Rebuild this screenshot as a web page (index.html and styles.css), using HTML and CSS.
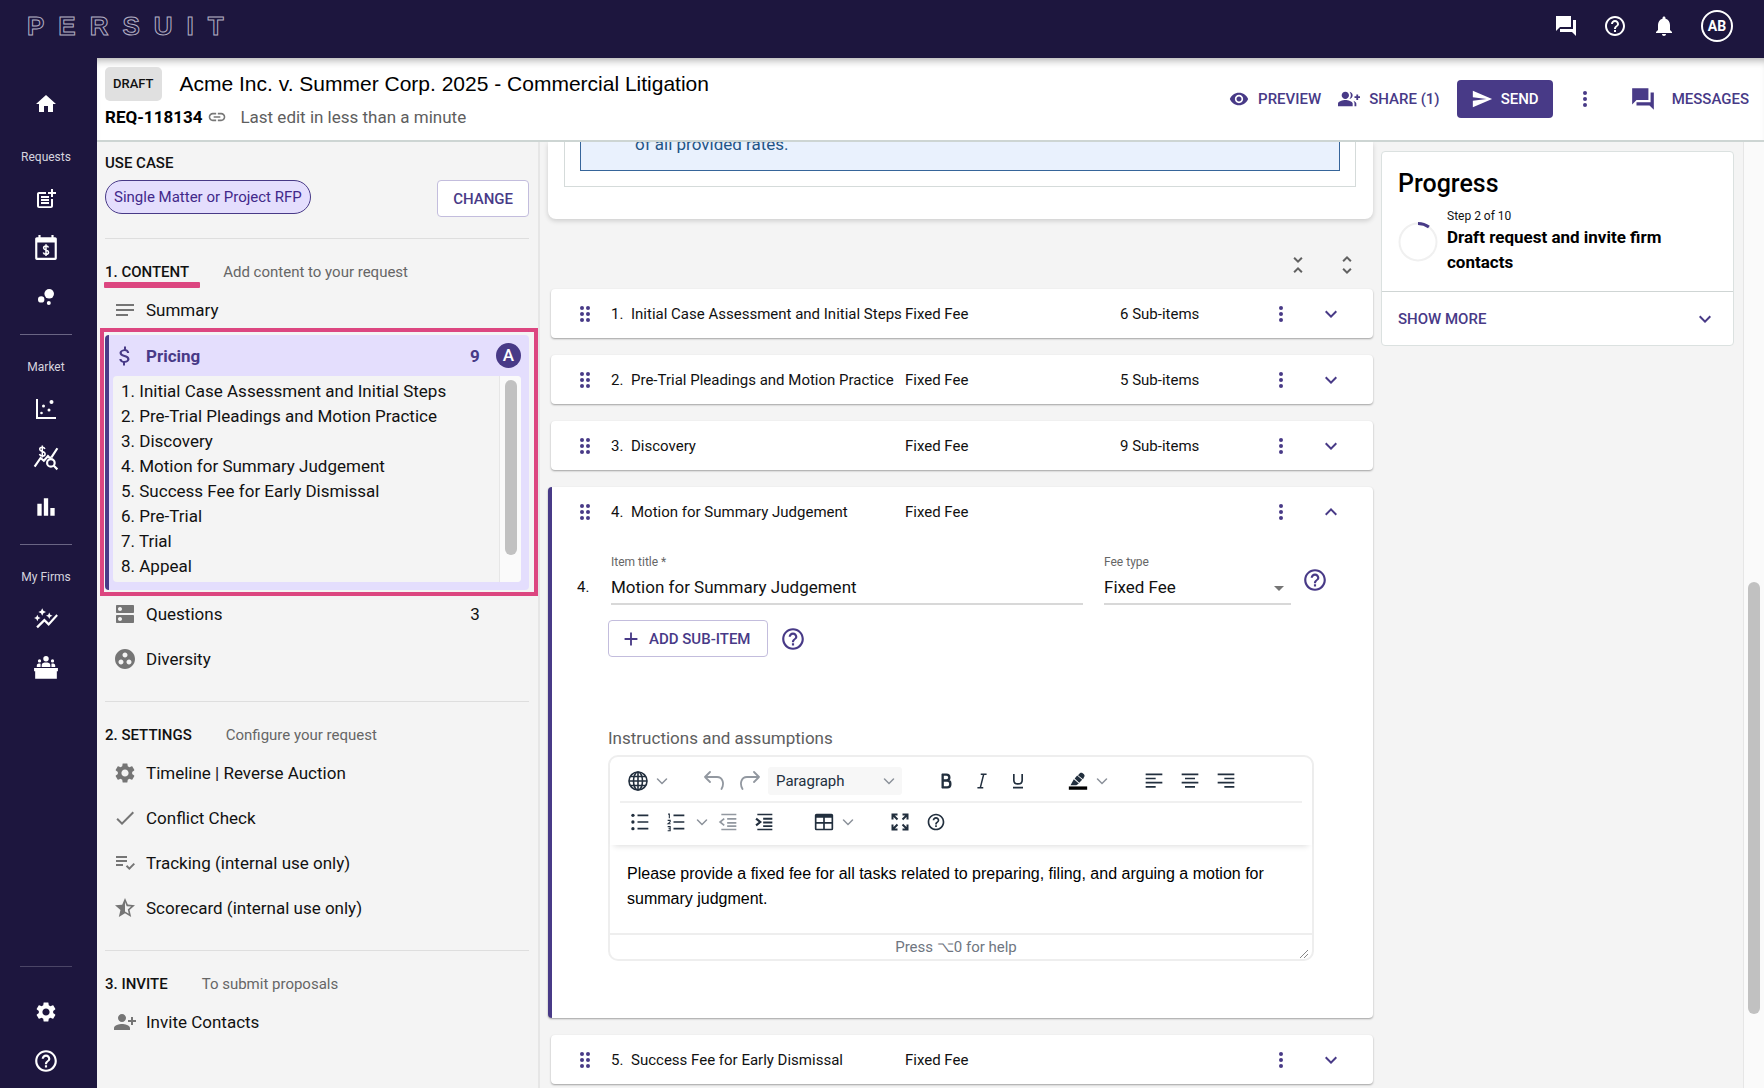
FILE: index.html
```html
<!DOCTYPE html>
<html lang="en">
<head>
<meta charset="utf-8">
<title>Persuit - Acme Inc. v. Summer Corp. 2025</title>
<meta name="viewport" content="width=device-width, initial-scale=1">
<link rel="stylesheet" href="styles.css">
</head>
<body>
<svg class="sprite" aria-hidden="true">
  <symbol id="home" viewBox="0 0 24 24"><path d="M10 20v-6h4v6h5v-8h3L12 3 2 12h3v8z"/></symbol>
  <symbol id="post-add" viewBox="0 0 24 24"><path d="M17 19.2H5V7h7V5H5c-1.100 0-2 .9-2 2v12c0 1.100.9 2 2 2h12c1.100 0 2-.9 2-2v-7h-2zM19 2h-2v3h-3v2h3v3h2V7h3V5h-3zM7 9h8v2H7zM7 12h8v2H7zM7 15h8v2H7z"/></symbol>
  <symbol id="calendar-fee" viewBox="0 0 24 24"><path fill-rule="evenodd" d="M5 0h2v2h10V0h2v2h1.500c.8 0 1.500.7 1.500 1.500v18c0 .8-.7 1.500-1.500 1.500h-17c-.8 0-1.500-.7-1.500-1.500v-18C2 2.700 2.700 2 3.500 2H5zM4 7v14h16V7z"/><path fill="none" stroke="currentColor" stroke-width="1.400" d="M14.300 11.600c-.3-1-1.100-1.500-2.300-1.500-1.300 0-2.200.7-2.200 1.800 0 2.400 4.600 1.300 4.600 4 0 1.200-1 1.900-2.400 1.900s-2.200-.6-2.500-1.700M12 8.600v10.700"/></symbol>
  <symbol id="bubbles" viewBox="0 0 24 24"><circle cx="7.200" cy="14.400" r="3.200"/><circle cx="14.800" cy="18" r="2"/><circle cx="15.200" cy="8.800" r="4.800"/></symbol>
  <symbol id="scatter" viewBox="0 0 24 24"><path d="M2 2h2v18h18v2H2z"/><circle cx="17.500" cy="5" r="2"/><circle cx="9.500" cy="9" r="1.500"/><circle cx="15" cy="13" r="1.500"/><circle cx="7.500" cy="16" r="1.300"/></symbol>
  <symbol id="fee-search" viewBox="0 0 24 24"><g fill="none" stroke="currentColor"><path stroke-width="1.400" d="M11 3.700C10.600 2.600 9.800 2 8.500 2 7.100 2 6.200 2.800 6.200 3.900c0 2.600 5 1.500 5 4.300 0 1.300-1.100 2-2.600 2-1.400 0-2.300-.7-2.600-1.900M8.600.5v11"/><path stroke-width="2" d="M1.500 20l5.500-8 3 2.500 4.500-5M14 11l3 1M17 11.500l5.500-8.500"/><circle stroke-width="2" cx="16.500" cy="16.500" r="3.500"/><path stroke-width="2" d="M19 19l3.500 3.500"/></g></symbol>
  <symbol id="bars" viewBox="0 0 24 24"><path d="M10 20h4V4h-4zM4 20h4V9H4zM16 13v7h4v-7z"/></symbol>
  <symbol id="auto-graph" viewBox="0 0 24 24"><path d="M14.060 9.940 12 9l2.060-.94L15 6l.94 2.060L18 9l-2.060.94L15 12zM4 14l.94-2.060L7 11l-2.060-.94L4 8l-.94 2.060L1 11l2.060.94zM8.500 9l1.090-2.410L12 5.500 9.590 4.410 8.500 2 7.410 4.410 5 5.500l2.410 1.090zM4.500 20.500l6-6.010 4 4L23 8.930l-1.410-1.410-7.090 7.970-4-4L3 19z"/></symbol>
  <symbol id="panel" viewBox="0 0 24 24"><circle cx="12" cy="3.500" r="2.500"/><circle cx="6" cy="5.500" r="1.500"/><circle cx="18" cy="5.500" r="1.500"/><path d="M8 11V9.500C8 7.500 10 7 12 7s4 .5 4 2.500V11zM3.500 11v-1.300C3.500 8.300 5 7.800 7 8v3zM20.500 11v-1.300c0-1.400-1.500-1.900-3.500-1.700v3zM1 12h22v3h-1v7H2v-7H1z"/></symbol>
  <symbol id="gear" viewBox="0 0 24 24"><path d="M19.140 12.940c.04-.3.060-.61.060-.94 0-.32-.02-.64-.07-.94l2.030-1.580c.18-.14.23-.41.120-.61l-1.920-3.320c-.12-.22-.37-.29-.59-.22l-2.390.96c-.5-.38-1.030-.7-1.620-.94l-.36-2.540c-.04-.24-.24-.41-.48-.41h-3.840c-.24 0-.43.17-.47.41l-.36 2.540c-.59.24-1.130.57-1.620.94l-2.390-.96c-.22-.08-.47 0-.59.22L2.740 8.870c-.12.21-.08.47.120.61l2.030 1.580c-.05.3-.09.63-.09.94s.02.64.07.94l-2.030 1.580c-.18.14-.23.41-.12.61l1.920 3.320c.12.22.37.29.59.22l2.390-.96c.5.38 1.030.7 1.620.94l.36 2.540c.05.24.24.41.48.41h3.840c.24 0 .44-.17.47-.41l.36-2.540c.59-.24 1.130-.56 1.620-.94l2.390.96c.22.08.47 0 .59-.22l1.920-3.320c.12-.22.07-.47-.12-.61zM12 15.600c-1.980 0-3.600-1.620-3.600-3.600s1.620-3.600 3.600-3.600 3.600 1.620 3.600 3.600-1.620 3.600-3.600 3.600z"/></symbol>
  <symbol id="help" viewBox="0 0 24 24"><path d="M11 18h2v-2h-2zm1-16C6.480 2 2 6.480 2 12s4.480 10 10 10 10-4.480 10-10S17.520 2 12 2zm0 18c-4.410 0-8-3.590-8-8s3.590-8 8-8 8 3.590 8 8-3.590 8-8 8zm0-14c-2.210 0-4 1.790-4 4h2c0-1.100.9-2 2-2s2 .9 2 2c0 2-3 1.750-3 5h2c0-2.250 3-2.500 3-5 0-2.210-1.790-4-4-4z"/></symbol>
  <symbol id="chat" viewBox="0 0 24 24"><path d="M22 6h-3v9H6v3h12l4 4zM17 13V2H2v15l4-4z"/></symbol>
  <symbol id="bell" viewBox="0 0 24 24"><path d="M12 22c1.100 0 2-.9 2-2h-4c0 1.100.89 2 2 2zm6-6v-5c0-3.070-1.640-5.640-4.500-6.320V4c0-.83-.67-1.500-1.500-1.500s-1.500.67-1.500 1.500v.68C7.630 5.360 6 7.920 6 11v5l-2 2v1h16v-1z"/></symbol>
  <symbol id="link" viewBox="0 0 24 24"><path d="M3.900 12c0-1.710 1.390-3.100 3.100-3.100h4V7H7c-2.760 0-5 2.240-5 5s2.240 5 5 5h4v-1.900H7c-1.710 0-3.100-1.390-3.100-3.100zM8 13h8v-2H8zM17 7h-4v1.900h4c1.710 0 3.100 1.390 3.100 3.100s-1.390 3.100-3.100 3.100h-4V17h4c2.760 0 5-2.240 5-5s-2.240-5-5-5z"/></symbol>
  <symbol id="eye" viewBox="0 0 24 24"><path d="M12 4.500C7 4.500 2.730 7.610 1 12c1.730 4.390 6 7.500 11 7.500s9.270-3.110 11-7.500c-1.730-4.390-6-7.500-11-7.500zM12 17c-2.760 0-5-2.240-5-5s2.240-5 5-5 5 2.240 5 5-2.240 5-5 5zm0-8c-1.660 0-3 1.340-3 3s1.340 3 3 3 3-1.340 3-3-1.340-3-3-3z"/></symbol>
  <symbol id="group-add" viewBox="0 0 24 24"><path d="M22 9V7h-2v2h-2v2h2v2h2v-2h2V9zM8 12c2.210 0 4-1.790 4-4s-1.790-4-4-4-4 1.790-4 4 1.790 4 4 4zM8 13c-2.670 0-8 1.340-8 4v3h16v-3c0-2.660-5.330-4-8-4zM12.510 4.050C13.430 5.110 14 6.490 14 8s-.57 2.890-1.490 3.950C14.470 11.700 16 10.040 16 8s-1.530-3.700-3.490-3.950zM16.530 13.830C17.420 14.660 18 15.700 18 17v3h2v-3c0-1.450-1.590-2.510-3.470-3.170z"/></symbol>
  <symbol id="send" viewBox="0 0 24 24"><path d="M2 21 23 12 2 3v7l15 2-15 2z"/></symbol>
  <symbol id="more" viewBox="0 0 24 24"><circle cx="12" cy="6" r="2"/><circle cx="12" cy="12" r="2"/><circle cx="12" cy="18" r="2"/></symbol>
  <symbol id="drag" viewBox="0 0 24 24"><circle cx="9" cy="6" r="2"/><circle cx="9" cy="12" r="2"/><circle cx="9" cy="18" r="2"/><circle cx="15" cy="6" r="2"/><circle cx="15" cy="12" r="2"/><circle cx="15" cy="18" r="2"/></symbol>
  <symbol id="down" viewBox="0 0 24 24"><path d="M16.590 8.590 12 13.170 7.410 8.590 6 10l6 6 6-6z"/></symbol>
  <symbol id="up" viewBox="0 0 24 24"><path d="M12 8l-6 6 1.410 1.410L12 10.830l4.590 4.580L18 14z"/></symbol>
  <symbol id="fold" viewBox="0 0 24 24"><path d="M7.410 18.590 8.830 20 12 16.830 15.170 20l1.410-1.410L12 14zM16.590 5.410 15.170 4 12 7.170 8.830 4 7.410 5.410 12 10z"/></symbol>
  <symbol id="unfold" viewBox="0 0 24 24"><path d="M12 5.830 15.170 9l1.410-1.410L12 3 7.410 7.590 8.830 9zM12 18.170 8.830 15l-1.410 1.410L12 21l4.590-4.590L15.170 15z"/></symbol>
  <symbol id="notes" viewBox="0 0 24 24"><path d="M3 18h12v-2H3zM3 6v2h18V6zM3 13h18v-2H3z"/></symbol>
  <symbol id="money" viewBox="0 0 24 24"><path d="M11.800 10.900c-2.270-.59-3-1.200-3-2.150 0-1.090 1.010-1.850 2.700-1.850 1.780 0 2.440.85 2.500 2.100h2.210c-.07-1.720-1.120-3.300-3.210-3.810V2.500h-2v2.660c-1.940.42-4.500 1.680-4.500 3.610 0 2.310 1.910 3.460 4.700 4.130 2.500.6 3 1.480 3 2.410 0 .69-.49 1.790-2.700 1.790-2.060 0-2.870-.92-2.980-2.100h-2.200c.12 2.190 1.760 3.420 3.680 3.830v2.670h2v-2.650c1.950-.37 4.500-1.500 4.500-3.550 0-2.840-2.430-3.810-4.700-4.400z"/></symbol>
  <symbol id="server" viewBox="0 0 24 24"><path d="M20 13H4c-.55 0-1 .45-1 1v6c0 .55.45 1 1 1h16c.55 0 1-.45 1-1v-6c0-.55-.45-1-1-1zM7 19c-1.100 0-2-.9-2-2s.9-2 2-2 2 .9 2 2-.9 2-2 2zM20 3H4c-.55 0-1 .45-1 1v6c0 .55.45 1 1 1h16c.55 0 1-.45 1-1V4c0-.55-.45-1-1-1zM7 9c-1.100 0-2-.9-2-2s.9-2 2-2 2 .9 2 2-.9 2-2 2z"/></symbol>
  <symbol id="group-work" viewBox="0 0 24 24"><path d="M12 2C6.480 2 2 6.480 2 12s4.480 10 10 10 10-4.480 10-10S17.520 2 12 2zM8 17.500c-1.380 0-2.500-1.120-2.500-2.500s1.120-2.500 2.500-2.500 2.500 1.120 2.500 2.500-1.120 2.500-2.500 2.500zM9.500 8c0-1.380 1.120-2.500 2.500-2.500s2.500 1.120 2.500 2.500-1.120 2.500-2.500 2.500S9.500 9.380 9.500 8zm6.500 9.500c-1.380 0-2.500-1.120-2.500-2.500s1.120-2.500 2.500-2.500 2.500 1.120 2.500 2.500-1.120 2.500-2.500 2.500z"/></symbol>
  <symbol id="check" viewBox="0 0 24 24"><path d="M9 16.170 4.830 12l-1.420 1.410L9 19 21 7l-1.410-1.410z"/></symbol>
  <symbol id="list-check" viewBox="0 0 24 24"><path d="M3 9h11v2H3zM3 5h11v2H3zM3 13h7v2H3zM20.590 11.930l-4.250 4.240-2.120-2.120-1.410 1.410L16.340 19 22 13.340z"/></symbol>
  <symbol id="star-half" viewBox="0 0 24 24"><path d="M22 9.240l-7.190-.62L12 2 9.190 8.630 2 9.240l5.460 4.730L5.820 21 12 17.270 18.180 21l-1.630-7.030zM12 15.400V6.100l1.710 4.040 4.380.38-3.320 2.880 1 4.280z"/></symbol>
  <symbol id="person-add" viewBox="0 0 24 24"><path d="M13 8c0-2.210-1.790-4-4-4S5 5.790 5 8s1.790 4 4 4 4-1.790 4-4zM15 10v2h3v3h2v-3h3v-2h-3V7h-2v3zM1 18v2h16v-2c0-2.660-5.330-4-8-4s-8 1.340-8 4z"/></symbol>
  <symbol id="plus" viewBox="0 0 24 24"><path d="M19 13h-6v6h-2v-6H5v-2h6V5h2v6h6z"/></symbol>
  <symbol id="caret" viewBox="0 0 24 24"><path d="M7 10l5 5 5-5z"/></symbol>
  <symbol id="globe" viewBox="2 2 20 20"><g fill="none" stroke="currentColor" stroke-width="1.600"><circle cx="12" cy="12" r="9"/><ellipse cx="12" cy="12" rx="4.500" ry="9"/><path d="M12 3v18M3 12h18M4.500 7.500h15M4.500 16.500h15"/></g></symbol>
  <symbol id="thin-down" viewBox="0 0 16 16"><path fill="none" stroke="currentColor" stroke-width="1.500" stroke-linecap="round" d="M3.500 6 8 10.500 12.500 6"/></symbol>
  <symbol id="undo" viewBox="2 2 20 20"><path fill="none" stroke="currentColor" stroke-width="1.800" stroke-linecap="round" stroke-linejoin="round" d="M8 3 3 8l5 5M3 8h12c6 0 7.500 7 4.500 12"/></symbol>
  <symbol id="redo" viewBox="2 2 20 20"><path fill="none" stroke="currentColor" stroke-width="1.800" stroke-linecap="round" stroke-linejoin="round" d="M16 3l5 5-5 5M21 8H9C3 8 1.500 15 4.500 20"/></symbol>
  <symbol id="bold" viewBox="0 0 24 24"><path fill="none" stroke="currentColor" stroke-width="2.800" d="M7 4.400h5.500c4.700 0 4.700 7 0 7H7h6.500c5 0 5 8.200 0 8.200H7M8 3.500v17"/></symbol>
  <symbol id="italic" viewBox="0 0 24 24"><path fill="none" stroke="currentColor" stroke-width="1.800" d="M10.500 4h7M6.500 20h7M14 4l-4 16"/></symbol>
  <symbol id="underline" viewBox="0 0 24 24"><path fill="none" stroke="currentColor" stroke-width="2" d="M7 3.500V11c0 6 10 6 10 0V3.500M6 20h12"/></symbol>
  <symbol id="marker" viewBox="0 0 24 24"><path d="M3 17l4-7 6 5-3 2zM8 9l3-3.500 6 5-3.500 3.500zM12 5l2.500-2.500c2-2 7 2 5 4.500L18 10z"/><path fill="#000" d="M1 18.500h22v4H1z"/></symbol>
  <symbol id="align-left" viewBox="0 0 24 24"><path d="M2 3h20v2H2zM2 8h12v2H2zM2 13h20v2H2zM2 18h12v2H2z"/></symbol>
  <symbol id="align-center" viewBox="0 0 24 24"><path d="M2 3h20v2H2zM6 8h12v2H6zM2 13h20v2H2zM6 18h12v2H6z"/></symbol>
  <symbol id="align-right" viewBox="0 0 24 24"><path d="M2 3h20v2H2zM10 8h12v2H10zM2 13h20v2H2zM10 18h12v2H10z"/></symbol>
  <symbol id="bullets" viewBox="0 0 24 24"><path d="M9 3h13v2H9zM9 11h13v2H9zM9 19h13v2H9z"/><circle cx="3.500" cy="4" r="2"/><circle cx="3.500" cy="12" r="2"/><circle cx="3.500" cy="20" r="2"/></symbol>
  <symbol id="numbers" viewBox="0 0 24 24"><path d="M9 3h13v2H9zM9 11h13v2H9zM9 19h13v2H9z"/><path fill="none" stroke="currentColor" stroke-width="1.300" d="M2.500 2.500H4v5M2 10h3v1.800L2.500 14H5.500M2 17.500h3v5H2M3 20h2"/></symbol>
  <symbol id="outdent" viewBox="0 0 24 24"><path d="M4 2h18v2H4zM11 7.300h11v2H11zM11 12h11v2H11zM4 20h18v2H4zM11 16h11v2H11z"/><path fill="none" stroke="currentColor" stroke-width="2" d="M7.500 8l-5 4 5 4"/></symbol>
  <symbol id="indent" viewBox="0 0 24 24"><path d="M4 2h18v2H4zM11 7h11v2.400H11zM11 11.500h11v2.400H11zM4 20h18v2H4zM11 16h11v2H11z"/><path fill="none" stroke="currentColor" stroke-width="2.600" d="M2.500 8l5 4-5 4"/></symbol>
  <symbol id="table" viewBox="0 0 24 24"><path fill-rule="evenodd" d="M3 2h18a2 2 0 0 1 2 2v16a2 2 0 0 1-2 2H3a2 2 0 0 1-2-2V4a2 2 0 0 1 2-2zM3 7v5h8V7zM13 7v5h8V7zM3 14v6h8v-6zM13 14v6h8v-6z"/></symbol>
  <symbol id="fullscreen" viewBox="0 0 24 24"><path fill="none" stroke="currentColor" stroke-width="2.400" d="M9 3H3v6M3 3l6 6M15 3h6v6M21 3l-6 6M9 21H3v-6M3 21l6-6M15 21h6v-6M21 21l-6-6"/></symbol>
</svg>

<header class="topbar">
  <a class="logo" href="#">PERSUIT</a>
  <div class="topbar-actions">
    <button class="icon-btn" aria-label="Chat"><svg class="icon"><use href="#chat"/></svg></button>
    <button class="icon-btn" aria-label="Help"><svg class="icon"><use href="#help"/></svg></button>
    <button class="icon-btn" aria-label="Notifications"><svg class="icon"><use href="#bell"/></svg></button>
    <button class="account">AB</button>
  </div>
</header>

<div class="shell">
  <nav class="rail" aria-label="Main">
    <a class="rail-link" href="#" aria-label="Home"><svg class="icon"><use href="#home"/></svg></a>
    <div class="rail-group rail-first">
      <span class="rail-label">Requests</span>
      <a class="rail-link" href="#" aria-label="New request"><svg class="icon"><use href="#post-add"/></svg></a>
      <a class="rail-link" href="#" aria-label="Fee calendar"><svg class="icon icon-lg"><use href="#calendar-fee"/></svg></a>
      <a class="rail-link" href="#" aria-label="Bubbles"><svg class="icon"><use href="#bubbles"/></svg></a>
    </div>
    <div class="rail-group">
      <span class="rail-label">Market</span>
      <a class="rail-link" href="#" aria-label="Scatter"><svg class="icon"><use href="#scatter"/></svg></a>
      <a class="rail-link" href="#" aria-label="Fee search"><svg class="icon icon-lg"><use href="#fee-search"/></svg></a>
      <a class="rail-link" href="#" aria-label="Reports"><svg class="icon icon-lg"><use href="#bars"/></svg></a>
    </div>
    <div class="rail-group">
      <span class="rail-label">My Firms</span>
      <a class="rail-link" href="#" aria-label="Insights"><svg class="icon icon-lg"><use href="#auto-graph"/></svg></a>
      <a class="rail-link" href="#" aria-label="Panels"><svg class="icon icon-lg"><use href="#panel"/></svg></a>
    </div>
    <div class="rail-group rail-bottom">
      <a class="rail-link" href="#" aria-label="Settings"><svg class="icon"><use href="#gear"/></svg></a>
      <a class="rail-link" href="#" aria-label="Support"><svg class="icon icon-lg"><use href="#help"/></svg></a>
    </div>
  </nav>

  <div class="page">
    <div class="titlebar">
      <div class="title-info">
        <div class="title-line"><span class="badge">DRAFT</span><h1 class="title">Acme Inc. v. Summer Corp. 2025 - Commercial Litigation</h1></div>
        <div class="meta-line"><strong class="req-id">REQ-118134</strong><svg class="icon icon-sm"><use href="#link"/></svg><span class="last-edit">Last edit in less than a minute</span></div>
      </div>
      <div class="title-actions">
        <button class="text-btn"><svg class="icon icon-sm"><use href="#eye"/></svg>PREVIEW</button>
        <button class="text-btn"><svg class="icon icon-md"><use href="#group-add"/></svg>SHARE (1)</button>
        <button class="send-btn"><svg class="icon icon-md"><use href="#send"/></svg>SEND</button>
        <button class="icon-btn more-btn" aria-label="More"><svg class="icon"><use href="#more"/></svg></button>
        <button class="text-btn messages"><svg class="icon icon-lg"><use href="#chat"/></svg>MESSAGES</button>
      </div>
    </div>

    <div class="workspace">
      <aside class="outline">
        <h2 class="heading">USE CASE</h2>
        <div class="use-case"><span class="chip">Single Matter or Project RFP</span><button class="outline-btn">CHANGE</button></div>

        <section class="section">
          <div class="section-head"><h2 class="heading marked">1. CONTENT</h2><span class="hint">Add content to your request</span></div>
          <a class="step" href="#"><svg class="icon"><use href="#notes"/></svg><span class="step-name">Summary</span></a>
          <div class="pricing">
            <a class="step step-active" href="#"><svg class="icon"><use href="#money"/></svg><span class="step-name">Pricing</span><span class="count">9</span><span class="avatar">A</span></a>
            <div class="price-box">
              <ol class="price-list">
                <li>Initial Case Assessment and Initial Steps</li>
                <li>Pre-Trial Pleadings and Motion Practice</li>
                <li>Discovery</li>
                <li>Motion for Summary Judgement</li>
                <li>Success Fee for Early Dismissal</li>
                <li>Pre-Trial</li>
                <li>Trial</li>
                <li>Appeal</li>
              </ol>
              <div class="track list-track"><div class="thumb"></div></div>
            </div>
          </div>
          <a class="step" href="#"><svg class="icon"><use href="#server"/></svg><span class="step-name">Questions</span><span class="count">3</span></a>
          <a class="step" href="#"><svg class="icon"><use href="#group-work"/></svg><span class="step-name">Diversity</span></a>
        </section>

        <section class="section">
          <div class="section-head"><h2 class="heading">2. SETTINGS</h2><span class="hint">Configure your request</span></div>
          <a class="step" href="#"><svg class="icon"><use href="#gear"/></svg><span class="step-name">Timeline | Reverse Auction</span></a>
          <a class="step" href="#"><svg class="icon"><use href="#check"/></svg><span class="step-name">Conflict Check</span></a>
          <a class="step" href="#"><svg class="icon"><use href="#list-check"/></svg><span class="step-name">Tracking (internal use only)</span></a>
          <a class="step" href="#"><svg class="icon"><use href="#star-half"/></svg><span class="step-name">Scorecard (internal use only)</span></a>
        </section>

        <section class="section">
          <div class="section-head"><h2 class="heading">3. INVITE</h2><span class="hint">To submit proposals</span></div>
          <a class="step" href="#"><svg class="icon"><use href="#person-add"/></svg><span class="step-name">Invite Contacts</span></a>
        </section>
      </aside>

      <main class="content">
        <div class="items">
          <div class="notice-card"><div class="notice-frame"><p class="notice">of all provided rates.</p></div></div>
          <div class="fold-tools">
            <button class="icon-btn" aria-label="Collapse all"><svg class="icon"><use href="#fold"/></svg></button>
            <button class="icon-btn" aria-label="Expand all"><svg class="icon"><use href="#unfold"/></svg></button>
          </div>

          <article class="item"><div class="item-row"><svg class="icon"><use href="#drag"/></svg><span>1.</span><span>Initial Case Assessment and Initial Steps</span><span>Fixed Fee</span><span>6 Sub-items</span><button class="icon-btn" aria-label="More"><svg class="icon"><use href="#more"/></svg></button><button class="icon-btn" aria-label="Expand"><svg class="icon"><use href="#down"/></svg></button></div></article>
          <article class="item"><div class="item-row"><svg class="icon"><use href="#drag"/></svg><span>2.</span><span>Pre-Trial Pleadings and Motion Practice</span><span>Fixed Fee</span><span>5 Sub-items</span><button class="icon-btn" aria-label="More"><svg class="icon"><use href="#more"/></svg></button><button class="icon-btn" aria-label="Expand"><svg class="icon"><use href="#down"/></svg></button></div></article>
          <article class="item"><div class="item-row"><svg class="icon"><use href="#drag"/></svg><span>3.</span><span>Discovery</span><span>Fixed Fee</span><span>9 Sub-items</span><button class="icon-btn" aria-label="More"><svg class="icon"><use href="#more"/></svg></button><button class="icon-btn" aria-label="Expand"><svg class="icon"><use href="#down"/></svg></button></div></article>

          <article class="item item-open">
            <div class="item-row"><svg class="icon"><use href="#drag"/></svg><span>4.</span><span>Motion for Summary Judgement</span><span>Fixed Fee</span><span></span><button class="icon-btn" aria-label="More"><svg class="icon"><use href="#more"/></svg></button><button class="icon-btn" aria-label="Collapse"><svg class="icon"><use href="#up"/></svg></button></div>
            <div class="fields">
              <span class="field-no">4.</span>
              <div class="field"><label for="item-title">Item title *</label><input id="item-title" type="text" value="Motion for Summary Judgement"></div>
              <div class="field field-select"><label for="fee-type">Fee type</label><div class="select"><select id="fee-type"><option>Fixed Fee</option></select><svg class="icon"><use href="#caret"/></svg></div></div>
              <button class="icon-btn" aria-label="Fee type help"><svg class="icon icon-lg"><use href="#help"/></svg></button>
            </div>
            <div class="item-body">
              <div class="add-line"><button class="outline-btn add-btn"><svg class="icon icon-md"><use href="#plus"/></svg>ADD SUB-ITEM</button><button class="icon-btn" aria-label="Sub-item help"><svg class="icon icon-lg"><use href="#help"/></svg></button></div>
              <div class="editor-label" id="editor-label">Instructions and assumptions</div>
              <div class="editor">
                <div class="toolbar">
                  <div class="tool-row">
                    <div class="tools"><button class="tool split" aria-label="Language"><svg class="icon"><use href="#globe"/></svg></button><button class="tool-arrow" aria-label="Language menu"><svg><use href="#thin-down"/></svg></button></div>
                    <div class="tools"><button class="tool muted" aria-label="Undo"><svg class="icon"><use href="#undo"/></svg></button><button class="tool muted" aria-label="Redo"><svg class="icon"><use href="#redo"/></svg></button><button class="block-format">Paragraph<svg><use href="#thin-down"/></svg></button></div>
                    <div class="tools"><button class="tool" aria-label="Bold"><svg class="icon"><use href="#bold"/></svg></button><button class="tool" aria-label="Italic"><svg class="icon"><use href="#italic"/></svg></button><button class="tool" aria-label="Underline"><svg class="icon"><use href="#underline"/></svg></button></div>
                    <div class="tools"><button class="tool split" aria-label="Highlight"><svg class="icon"><use href="#marker"/></svg></button><button class="tool-arrow" aria-label="Highlight menu"><svg><use href="#thin-down"/></svg></button></div>
                    <div class="tools"><button class="tool" aria-label="Align left"><svg class="icon"><use href="#align-left"/></svg></button><button class="tool" aria-label="Align center"><svg class="icon"><use href="#align-center"/></svg></button><button class="tool" aria-label="Align right"><svg class="icon"><use href="#align-right"/></svg></button></div>
                  </div>
                  <div class="tool-row">
                    <div class="tools"><button class="tool" aria-label="Bulleted list"><svg class="icon"><use href="#bullets"/></svg></button><button class="tool" aria-label="Numbered list"><svg class="icon"><use href="#numbers"/></svg></button><button class="tool-arrow" aria-label="List menu"><svg><use href="#thin-down"/></svg></button><button class="tool muted" aria-label="Outdent"><svg class="icon"><use href="#outdent"/></svg></button><button class="tool" aria-label="Indent"><svg class="icon"><use href="#indent"/></svg></button></div>
                    <div class="tools"><button class="tool split" aria-label="Table"><svg class="icon"><use href="#table"/></svg></button><button class="tool-arrow" aria-label="Table menu"><svg><use href="#thin-down"/></svg></button></div>
                    <div class="tools"><button class="tool" aria-label="Fullscreen"><svg class="icon"><use href="#fullscreen"/></svg></button><button class="tool" aria-label="Editor help"><svg class="icon"><use href="#help"/></svg></button></div>
                  </div>
                </div>
                <div class="editor-text" contenteditable="true" role="textbox" aria-labelledby="editor-label">Please provide a fixed fee for all tasks related to preparing, filing, and arguing a motion for summary judgment.</div>
                <div class="statusbar"><span class="status-hint">Press ⌥0 for help</span><svg class="resize" viewBox="0 0 10 10"><path d="M1 9l8-8M5 9l4-4"/></svg></div>
              </div>
            </div>
          </article>

          <article class="item"><div class="item-row"><svg class="icon"><use href="#drag"/></svg><span>5.</span><span>Success Fee for Early Dismissal</span><span>Fixed Fee</span><span></span><button class="icon-btn" aria-label="More"><svg class="icon"><use href="#more"/></svg></button><button class="icon-btn" aria-label="Expand"><svg class="icon"><use href="#down"/></svg></button></div></article>
        </div>

        <aside class="progress">
          <div class="progress-main">
            <h2 class="progress-title">Progress</h2>
            <div class="progress-step">
              <svg class="ring" viewBox="0 0 40 40"><circle cx="20" cy="20" r="18.500"/><path d="M20 1.500A18.500 18.500 0 0 1 30.900 5"/></svg>
              <div><div class="step-no">Step 2 of 10</div><strong class="step-text">Draft request and invite firm contacts</strong></div>
            </div>
          </div>
          <button class="show-more">SHOW MORE<svg class="icon"><use href="#down"/></svg></button>
        </aside>
      </main>
      <div class="track page-track"><div class="thumb"></div></div>
    </div>
  </div>
</div>
</body>
</html>
```

FILE: styles.css
```css
:root {
  --navy: #1d163e;
  --purple: #483a87;
  --lilac: #e4defd;
  --pink: #dc4680;
  --bg: #f4f4f4;
}
* { box-sizing: border-box; }
body {
  margin: 0;
  height: 100vh;
  display: flex;
  flex-direction: column;
  overflow: hidden;
  background: var(--bg);
  color: #111;
  font: 17px/24px Roboto, "Liberation Sans", sans-serif;
}
h1, h2, p { margin: 0; }
h1, h2 { font-weight: 500; }
a { color: inherit; text-decoration: none; }
button {
  display: flex;
  align-items: center;
  justify-content: center;
  margin: 0;
  padding: 0;
  border: 0;
  background: none;
  color: inherit;
  font: inherit;
  cursor: pointer;
}
svg { flex: none; fill: currentColor; }
.sprite { position: absolute; width: 0; height: 0; }
.icon { width: 24px; height: 24px; }
.icon-sm { width: 20px; height: 20px; }
.icon-md { width: 22px; height: 22px; }
.icon-lg { width: 26px; height: 26px; }

/* Top bar */
.topbar {
  flex: none;
  height: 58px;
  padding: 0 31px 6px 27px;
  display: flex;
  align-items: center;
  justify-content: space-between;
  background: var(--navy);
  color: #fff;
}
.logo {
  font: bold 26px/50px "Liberation Sans", Arial, sans-serif;
  letter-spacing: 14px;
  color: var(--navy);
  -webkit-text-stroke: 1px #b4b0c4;
}
.topbar-actions { display: flex; align-items: center; gap: 25px; }
.account {
  width: 32px;
  height: 32px;
  border: 2px solid #fff;
  border-radius: 50%;
  font-size: 14px;
  font-weight: 700;
}

/* Left rail */
.shell { flex: 1; min-height: 0; display: flex; }
.rail {
  flex: none;
  width: 97px;
  padding: 21px 5px 3px 0;
  display: flex;
  flex-direction: column;
  align-items: center;
  background: var(--navy);
  color: #fff;
}
.rail-link { height: 49px; display: flex; align-items: center; }
.rail-group {
  width: 52px;
  margin-top: 13px;
  padding-top: 22px;
  border-top: 1px solid #6a6584;
  display: flex;
  flex-direction: column;
  align-items: center;
}
.rail-first { margin-top: 0; padding-top: 19px; border-top: 0; }
.rail-label { margin-bottom: 7px; font-size: 12px; line-height: 20px; white-space: nowrap; color: #d6d4de; }
.rail-bottom { margin-top: auto; padding-top: 20px; border-color: #4b4566; }

/* Title bar */
.page { flex: 1; min-width: 0; display: flex; flex-direction: column; }
.titlebar {
  flex: none;
  height: 84px;
  padding: 9px 15px 0 8px;
  display: flex;
  justify-content: space-between;
  background: #fff;
  border-bottom: 2px solid #cdd5d3;
  box-shadow: inset 0 8px 8px -6px rgba(0, 0, 0, .35);
}
.title-line { display: flex; align-items: center; gap: 18px; height: 34px; }
.badge {
  padding: 0 8px;
  border-radius: 5px;
  background: #e0e0e0;
  font-size: 13px;
  font-weight: 500;
  line-height: 34px;
}
.title { font: 21px/28px "Liberation Sans", Arial, sans-serif; white-space: nowrap; color: #000; }
.meta-line { display: flex; align-items: center; height: 32px; }
.req-id { margin-right: 5px; font-weight: 700; color: #000; }
.meta-line .icon { color: #777; }
.last-edit { margin-left: 13px; color: #5e5e5e; }
.title-actions { display: flex; align-items: center; height: 64px; color: var(--purple); }
.text-btn { gap: 9px; margin-right: 17px; font-size: 15px; font-weight: 500; white-space: nowrap; }
.send-btn {
  gap: 8px;
  width: 96px;
  height: 38px;
  border-radius: 4px;
  background: var(--purple);
  color: #fff;
  font-size: 15px;
  font-weight: 500;
}
.more-btn { margin: 0 33px 0 20px; }
.messages { gap: 16px; margin-right: 0; }

/* Request outline */
.workspace { flex: 1; min-height: 0; display: flex; }
.outline {
  flex: none;
  width: 443px;
  padding: 12px 9px 0 8px;
  border-right: 2px solid #e6e6e6;
  overflow: hidden;
}
.heading { font-size: 15px; line-height: 18px; font-weight: 500; }
.use-case { display: flex; justify-content: space-between; align-items: flex-start; margin: 8px 0 21px; }
.chip {
  height: 34px;
  padding: 0 8px;
  border: 1px solid var(--purple);
  border-radius: 17px;
  background: var(--lilac);
  color: #42298a;
  font-size: 15px;
  line-height: 32px;
}
.outline-btn {
  height: 37px;
  padding: 0 15px;
  border: 1px solid #c3bddd;
  border-radius: 4px;
  background: #fff;
  color: var(--purple);
  font-size: 15px;
  font-weight: 500;
}
.section { padding: 17px 0 20px; border-top: 1px solid #dedede; }
.section-head { display: flex; align-items: center; gap: 34px; height: 31px; }
.hint { font-size: 15px; color: #666; }
.marked { position: relative; }
.marked::after {
  content: "";
  position: absolute;
  left: -1px;
  right: -11px;
  bottom: -7px;
  height: 6px;
  border-radius: 1px;
  background: var(--pink);
}
.step { display: flex; align-items: center; height: 45px; padding-left: 8px; }
.step .icon { color: #757575; }
.step-name { flex: 1; margin-left: 9px; }
.count { width: 18px; margin-right: 45px; text-align: center; }
.pricing {
  position: relative;
  margin: 3px 0 1px;
  padding: 0 8px 8px 4px;
  border-left: 4px solid var(--purple);
  border-radius: 4px;
  background: var(--lilac);
}
.pricing::after {
  content: "";
  position: absolute;
  inset: -7px -9px -6px -9px;
  border: 4px solid var(--pink);
  pointer-events: none;
}
.step-active { height: 41px; padding-left: 0; font-weight: 700; color: var(--purple); }
.step-active .icon { color: var(--purple); }
.step-active .count { margin-right: 12px; }
.avatar {
  width: 25px;
  height: 25px;
  border-radius: 50%;
  background: var(--purple);
  color: #fff;
  font-weight: 500;
  line-height: 25px;
  text-align: center;
}
.price-box { display: flex; border-radius: 4px; background: var(--bg); overflow: hidden; }
.price-list { flex: 1; margin: 0; padding: 3px 0 3px 8px; line-height: 25px; counter-reset: line; list-style: none; }
.price-list li::before { counter-increment: line; content: counter(line) ". "; }
.track { flex: none; display: flex; flex-direction: column; background: #fafafa; border-left: 1px solid #e6e6e6; }
.thumb { width: 12px; margin: 0 auto; border-radius: 6px; background: #c1c1c1; }
.list-track { width: 22px; padding-top: 4px; }
.list-track .thumb { flex: 175; }
.list-track::after { content: ""; flex: 27; }
.page-track { width: 21px; }
.page-track::before { content: ""; flex: 440; }
.page-track .thumb { flex: 432; }
.page-track::after { content: ""; flex: 74; }

/* Pricing items */
.content { flex: 1; min-width: 0; display: flex; align-items: flex-start; gap: 8px; padding: 0 9px 0 8px; overflow: hidden; }
.items { flex: 1; min-width: 0; }
.notice-card {
  padding: 0 17px 32px 16px;
  border-radius: 0 0 8px 8px;
  background: #fff;
  box-shadow: 0 2px 5px rgba(0, 0, 0, .16);
}
.notice-frame { padding: 0 15px 15px; border: 1px solid #d5dbda; border-top: 0; }
.notice {
  margin-top: -10px;
  padding: 0 54px 14px;
  border: 1px solid #36659a;
  border-top: 0;
  background: #e9f1fd;
  color: #1f5486;
}
.notice-card, .notice-frame { overflow: hidden; }
.fold-tools { display: flex; justify-content: flex-end; align-items: flex-start; gap: 25px; height: 70px; padding: 34px 14px 0 0; color: #616161; }
.item {
  margin: 0 0 17px 3px;
  border-radius: 4px;
  background: #fff;
  box-shadow: 0 1px 2px rgba(0, 0, 0, .35);
}
.item-row {
  display: grid;
  grid-template-columns: 38px 20px 274fr 215fr 149fr 50px 24px;
  align-items: center;
  height: 49px;
  padding: 0 30px 0 22px;
  font-size: 15px;
  white-space: nowrap;
}
.item-row .icon { color: var(--purple); display: block; }
.item-row .icon-btn { justify-content: flex-start; }
.item-open { margin-left: 0; border-left: 4px solid var(--purple); }
.item-open .item-row { padding-left: 21px; }
.fields { display: flex; align-items: center; padding: 18px 45px 0 25px; color: #111; }
.field-no { align-self: flex-end; width: 34px; font-size: 15px; line-height: 35px; }
.field { flex: 1; }
.field label { display: block; font-size: 12px; line-height: 16px; color: #666; }
.field input, .field select {
  display: block;
  width: 100%;
  height: 35px;
  padding: 0;
  border: 0;
  border-bottom: 2px solid #d8d8d8;
  border-radius: 0;
  background: none;
  color: #111;
  font: inherit;
  appearance: none;
  outline: 0;
}
.field-select { flex: none; width: 187px; margin: 0 11px 0 21px; }
.select { display: grid; align-items: center; }
.select > * { grid-area: 1 / 1; }
.select .icon { justify-self: end; color: #757575; pointer-events: none; }
.fields .icon-btn, .add-line .icon-btn { color: var(--purple); }
.item-body { padding: 15px 59px 57px 56px; }
.add-line { display: flex; align-items: center; gap: 12px; }
.add-btn { gap: 7px; padding: 0 16px 0 11px; }
.editor-label { margin: 69px 0 5px; color: #5e5e5e; }

/* Rich text editor */
.editor { border: 2px solid #eee; border-radius: 10px; }
.toolbar { padding: 0 10px; box-shadow: 0 5px 6px -4px rgba(0, 0, 0, .14); color: #222f3e; }
.tool-row { display: flex; gap: 26px; height: 44px; padding: 10px 2px 6px; }
.tool-row + .tool-row { border-top: 2px solid #f0f0f0; padding: 5px 2px 9px; }
.tools { display: flex; align-items: center; }
.tool { width: 36px; height: 28px; }
.tool .icon { width: 20px; height: 20px; }
.split { width: 32px; }
.muted { color: #9298a0; }
.tool-arrow { width: 16px; height: 28px; color: #8b919a; }
.tool-arrow svg, .block-format svg { width: 16px; height: 16px; color: #8b919a; }
.block-format {
  justify-content: space-between;
  width: 134px;
  height: 28px;
  padding: 0 5px 0 8px;
  border-radius: 3px;
  background: #f7f7f7;
  color: #222f3e;
  font-size: 15px;
}
.editor-text {
  padding: 16px 26px 22px 17px;
  font: 16px/25px "Liberation Sans", Arial, sans-serif;
  color: #000;
  outline: 0;
}
.statusbar { display: grid; align-items: center; justify-items: center; height: 26px; border-top: 2px solid #eee; font-size: 15px; color: #6f7681; }
.statusbar > * { grid-area: 1 / 1; }
.status-hint { padding-right: 10px; }
.resize { width: 10px; height: 10px; margin-right: 3px; justify-self: end; align-self: end; stroke: #888; }

/* Progress card */
.progress { flex: none; width: 353px; margin-top: 9px; border: 1px solid #dbe1e0; border-radius: 4px; background: #fff; }
.progress-main { padding: 16px 32px 16px 16px; }
.progress-title { font-size: 25px; line-height: 32px; color: #000; }
.progress-step { display: flex; align-items: center; gap: 9px; margin-top: 8px; }
.ring { width: 40px; height: 40px; }
.ring circle { fill: none; stroke: #f0f0f0; stroke-width: 2; }
.ring path { fill: none; stroke: var(--purple); stroke-width: 3; }
.step-no { font-size: 12px; line-height: 17px; }
.step-text { display: block; font-size: 17px; line-height: 25px; font-weight: 700; color: #000; }
.show-more {
  width: 100%;
  height: 54px;
  padding: 0 16px;
  justify-content: space-between;
  border-top: 1px solid #cfd5d4;
  color: var(--purple);
  font-size: 15px;
  font-weight: 500;
}
```
